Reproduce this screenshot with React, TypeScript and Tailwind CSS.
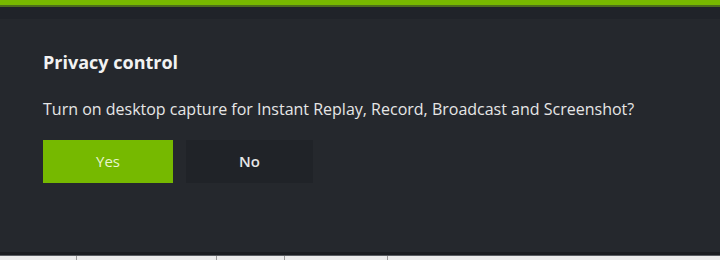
export default function App() {
  return (
    <div className="w-[720px] h-[260px] flex flex-col bg-[#25282d] overflow-hidden font-['Open_Sans','Noto_Sans',sans-serif]">
      <div className="h-[5px] bg-[#78b900]" />
      <div className="h-[2px] bg-[#4d6e1c]" />
      <div className="h-[12px] bg-[#202329]" />
      <div className="flex-1 flex flex-col px-[43px] pt-[31px]">
        <h1 className="text-[18px] leading-[24px] font-bold text-[#f2f2f2]">Privacy control</h1>
        <p className="mt-[24px] text-[16px] leading-[22px] text-[#e6e6e6]">
          Turn on desktop capture for Instant Replay, Record, Broadcast and Screenshot?
        </p>
        <div className="mt-[20px] flex gap-[13px]">
          <button className="w-[130px] h-[43px] bg-[#76b900] text-[15px] text-[#e8f5cf]">Yes</button>
          <button className="w-[127px] h-[43px] bg-[#202328] text-[15px] font-semibold text-[#e6e6e6]">No</button>
        </div>
      </div>
      <div className="h-[3px] bg-[#1b1d21]" />
      <div className="h-[1px] bg-[#5a5d62]" />
      <div className="h-[4px] bg-[#ececec] flex">
        <div className="w-[77px] border-r border-[#9a9a9a]" />
        <div className="w-[140px] border-r border-[#9a9a9a]" />
        <div className="w-[68px] border-r border-[#9a9a9a]" />
        <div className="w-[103px] border-r border-[#9a9a9a]" />
      </div>
    </div>
  );
}
